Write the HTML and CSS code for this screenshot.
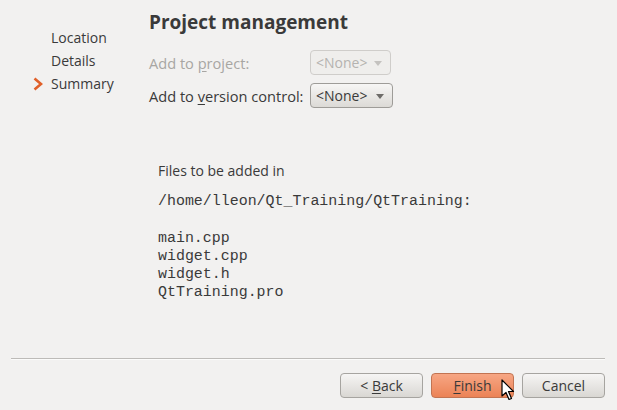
FILE: index.html
```html
<!DOCTYPE html>
<html>
<head>
<meta charset="utf-8">
<link rel="stylesheet" href="styles.css">
</head>
<body>
<div class="wizard">
  <div class="main">
    <ul class="steps">
      <li>Location</li>
      <li>Details</li>
      <li class="current"><svg class="chev" width="10" height="14" viewBox="0 0 10 14"><path d="M1.5 1.5 L8 7 L1.5 12.5" fill="none" stroke="#e0602a" stroke-width="2.6" stroke-linejoin="miter"/></svg>Summary</li>
    </ul>
    <div class="content">
      <h1>Project management</h1>
      <div class="form">
        <div class="row disabled">
          <span class="label">Add to <u>p</u>roject:</span>
          <span class="combo">&lt;None&gt;<i class="tri"></i></span>
        </div>
        <div class="row">
          <span class="label">Add to <u>v</u>ersion control:</span>
          <span class="combo">&lt;None&gt;<i class="tri"></i></span>
        </div>
      </div>
      <div class="summary">
        <p class="intro">Files to be added in</p>
        <p class="mono">/home/lleon/Qt_Training/QtTraining:</p>
        <pre class="mono files">main.cpp
widget.cpp
widget.h
QtTraining.pro</pre>
      </div>
    </div>
  </div>
  <div class="footer">
    <div class="sep"></div>
    <div class="buttons">
      <button class="btn">&lt; <u>B</u>ack</button>
      <button class="btn primary"><u>F</u>inish<svg class="cursor" width="14" height="22" viewBox="0 0 14 22"><path d="M1 1 L1 17 L5 13.5 L8 20.5 L10.5 19.5 L7.5 12.5 L12.5 12.5 Z" fill="#fff" stroke="#000" stroke-width="1.2" stroke-linejoin="round"/></svg></button>
      <button class="btn">Cancel</button>
    </div>
  </div>
</div>
</body>
</html>
```
FILE: styles.css
```css
html, body {
  margin: 0;
  padding: 0;
  background: #f2f1f0;
}
body {
  font-family: "Open Sans", "DejaVu Sans", sans-serif;
  font-size: 14px;
  color: #3a3a3a;
}
.wizard {
  width: 617px;
  height: 410px;
  display: flex;
  flex-direction: column;
}
.main {
  flex: 1;
  display: flex;
}
.steps {
  list-style: none;
  margin: 0;
  padding: 26px 0 0 51px;
  width: 98px;
  box-sizing: content-box;
}
.steps li {
  height: 23px;
  line-height: 23px;
  position: relative;
}
.chev {
  position: absolute;
  left: -18px;
  top: 5px;
}
.content {
  flex: 1;
  display: flex;
  flex-direction: column;
}
h1 {
  margin: 10px 0 0 0;
  font-size: 19px;
  line-height: 24px;
  font-weight: bold;
  color: #3a3a3a;
}
.form {
  margin-top: 16px;
  display: flex;
  flex-direction: column;
  gap: 8px;
}
.row {
  display: flex;
  align-items: center;
  height: 25px;
}
.label {
  width: 161px;
  white-space: nowrap;
  font-size: 14.6px;
}
.row.disabled .label { color: #a8a6a3; }
u { text-decoration: underline; text-underline-offset: 2px; }
.combo {
  box-sizing: border-box;
  width: 83px;
  height: 25px;
  border: 1px solid #9e9c98;
  border-radius: 4px;
  background: linear-gradient(#f7f6f5, #dcdad6);
  display: flex;
  align-items: center;
  padding-left: 5px;
  position: relative;
  color: #3a3a3a;
}
.row.disabled .combo {
  width: 81px;
  border-color: #cfcdca;
  background: #efeeec;
  color: #b5b3b0;
}
.tri {
  position: absolute;
  right: 8px;
  top: 10px;
  width: 0;
  height: 0;
  border-left: 4px solid transparent;
  border-right: 4px solid transparent;
  border-top: 5px solid #6e6c69;
}
.row.disabled .tri { border-top-color: #c4c2bf; }
.summary {
  padding-left: 9px;
  margin-top: 53px;
}
.summary p, .summary pre { margin: 0; }
.intro {
  line-height: 20px;
}
.mono {
  font-family: "Liberation Mono", "Courier New", monospace;
  font-size: 14.95px;
  color: #3a3a3a;
}
p.mono {
  margin-top: 10px !important;
  line-height: 20px;
}
.files {
  margin-top: 18px !important;
  line-height: 18px;
}
.footer {
  padding: 0 12px 12px 11px;
}
.sep {
  height: 1px;
  background: #bdbbb8;
  border-bottom: 1px solid #fbfbfa;
  margin-bottom: 13px;
}
.buttons {
  display: flex;
  justify-content: flex-end;
  gap: 8px;
}
.btn {
  box-sizing: border-box;
  width: 83px;
  height: 25px;
  border: 1px solid #a6a4a0;
  border-radius: 4px;
  background: linear-gradient(#f6f5f4, #d9d7d3);
  font-family: inherit;
  font-size: 14px;
  color: #3a3a3a;
  padding: 0;
  position: relative;
}
.btn.primary {
  border-color: #c27452;
  background: linear-gradient(#f7a684, #eb8356);
}
.cursor {
  position: absolute;
  left: 69px;
  top: 5px;
}
```
